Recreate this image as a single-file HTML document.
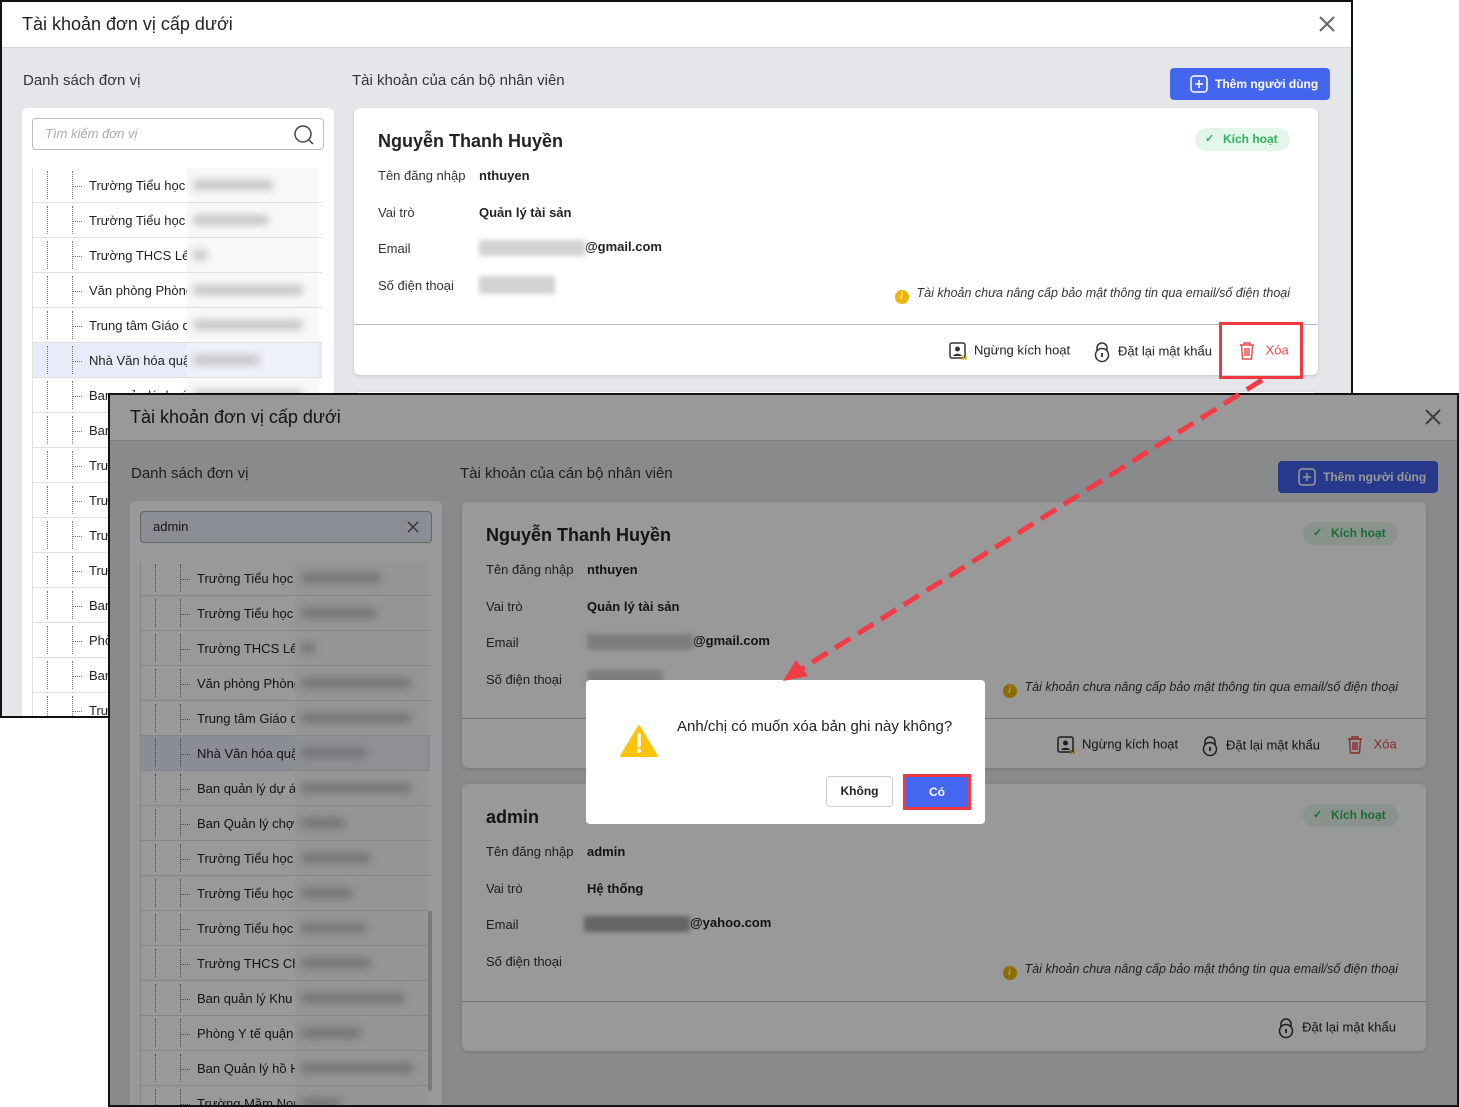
<!DOCTYPE html>
<html><head><meta charset="utf-8">
<style>
*{box-sizing:border-box;margin:0;padding:0}
html{overflow:hidden;width:1459px;height:1107px}
body{width:1459px;height:1107px;background:#fff;position:relative;overflow:hidden;font-family:"Liberation Sans",sans-serif;color:#222}
.win{position:absolute;background:#e5e6ea;border:2px solid #111;overflow:hidden}
.hd{position:absolute;left:0;top:0;right:0;height:46px;background:#fff;border-bottom:1px solid #d3d4d8}
.hd .t{position:absolute;left:20px;top:12px;font-size:18px;color:#222}
.hd .x{position:absolute;right:14px;top:12px}
.lbl{position:absolute;top:70px;font-size:15px;color:#333}
.btn{position:absolute;left:1168px;top:66px;width:160px;height:32px;background:#4465ee;border-radius:4px;color:#fff;font-size:12px;font-weight:bold;line-height:32px;padding-left:45px;white-space:nowrap}
.btn svg{position:absolute;left:20px;top:7px}
.lp{position:absolute;left:20px;top:106px;width:312px;height:640px;background:#fff;border-radius:6px;overflow:hidden}
.srch{position:absolute;left:10px;top:10px;width:292px;height:32px;border:1px solid #bbb;border-radius:4px;font-size:13px;line-height:30px;padding-left:12px}
.tree{position:absolute;left:10px;top:60px;width:290px}
.row{position:relative;height:35px;border-bottom:1px solid #e0e0e0;border-left:1px solid #e0e0e0;background:#fff}
.row.sel{background:#e8ecfa}
.row .v1,.row .v2{position:absolute;top:3px;bottom:3px;border-left:1px dotted #777}
.row .v1{left:14px}.row .v2{left:39px}
.row .h{position:absolute;left:40px;top:18px;width:9px;border-top:1px dotted #777}
.row .n{position:absolute;left:56px;top:10px;font-size:13px;width:98px;overflow:hidden;white-space:nowrap;color:#222}
.row .b{position:absolute;left:154px;top:0;width:132px;height:34px;background:#f8f8f8}
.row .b i{position:absolute;left:6px;top:12px;height:10px;background:#c4c4c4;filter:blur(4px);border-radius:4px}
.card{position:absolute;left:352px;width:964px;background:#fff;border-radius:6px;box-shadow:0 1px 3px rgba(0,0,0,.15)}
.card .nm{position:absolute;left:24px;top:23px;font-size:18px;font-weight:bold;color:#222}
.card .k{position:absolute;left:24px;font-size:13px;color:#333}
.card .v{position:absolute;left:125px;font-size:13px;font-weight:bold;color:#222}
.blr{display:inline-block;background:#d2d2d2;filter:blur(2.5px);vertical-align:middle;height:16px}
.badge{position:absolute;right:28px;top:20px;width:95px;height:23px;border-radius:12px;background:#e4f6ea;color:#2fb35b;font-size:12px;font-weight:bold;line-height:23px;padding-left:28px}
.badge:before{content:"✓";position:absolute;left:10px;font-size:11px}
.warn{position:absolute;right:28px;font-size:12.5px;font-style:italic;color:#333;white-space:nowrap}
.warn b{display:inline-block;width:14px;height:14px;border-radius:7px;background:#f1b400;color:#fff;font-size:10px;text-align:center;line-height:14px;margin-right:8px;vertical-align:-2px;font-style:italic}
.div{position:absolute;left:0;right:0;border-top:1px solid #bbb}
.act{position:absolute;font-size:13px;color:#222}
.act svg{vertical-align:middle;margin-right:6px}
.ov{position:absolute;left:0;top:0;right:0;bottom:0;background:rgba(0,0,0,.4)}
</style></head><body>

<!-- WINDOW 1 -->
<div class="win" style="left:0;top:0;width:1353px;height:718px">
 <div class="hd"><div class="t">Tài khoản đơn vị cấp dưới</div>
  <svg class="x" width="20" height="20" viewBox="0 0 20 20"><path d="M3 3L17 17M17 3L3 17" stroke="#666" stroke-width="2"/></svg></div>
 <div class="lbl" style="left:21px">Danh sách đơn vị</div>
 <div class="lbl" style="left:350px">Tài khoản của cán bộ nhân viên</div>
 <div class="btn"><svg width="18" height="18" viewBox="0 0 18 18"><rect x="1" y="1" width="16" height="16" rx="3" fill="none" stroke="#fff" stroke-width="1.5"/><path d="M9 5V13M5 9H13" stroke="#fff" stroke-width="1.5"/></svg>Thêm người dùng</div>
 <div class="lp">
  <div class="srch" style="color:#aaa;font-style:italic">Tìm kiếm đơn vị
   <svg style="position:absolute;right:8px;top:5px" width="22" height="22" viewBox="0 0 22 22"><circle cx="10" cy="10" r="8" fill="none" stroke="#444" stroke-width="1.5"/><path d="M16 16L20 20" stroke="#444" stroke-width="1.5"/></svg></div>
  <div class="tree">
   <div class="row"><i class="v1"></i><i class="v2"></i><i class="h"></i><span class="n">Trường Tiểu học</span><span class="b"><i style="width:80px"></i></span></div>
   <div class="row"><i class="v1"></i><i class="v2"></i><i class="h"></i><span class="n">Trường Tiểu học T</span><span class="b"><i style="width:76px"></i></span></div>
   <div class="row"><i class="v1"></i><i class="v2"></i><i class="h"></i><span class="n">Trường THCS Lê</span><span class="b"><i style="width:14px"></i></span></div>
   <div class="row"><i class="v1"></i><i class="v2"></i><i class="h"></i><span class="n">Văn phòng Phòng</span><span class="b"><i style="width:110px"></i></span></div>
   <div class="row"><i class="v1"></i><i class="v2"></i><i class="h"></i><span class="n">Trung tâm Giáo dục</span><span class="b"><i style="width:110px"></i></span></div>
   <div class="row sel"><i class="v1"></i><i class="v2"></i><i class="h"></i><span class="n">Nhà Văn hóa quận</span><span class="b" style="background:#eef0fa"><i style="width:66px"></i></span></div>
   <div class="row"><i class="v1"></i><i class="v2"></i><i class="h"></i><span class="n">Ban quản lý dự án</span><span class="b"><i style="width:110px"></i></span></div>
   <div class="row"><i class="v1"></i><i class="v2"></i><i class="h"></i><span class="n">Ban Quản lý chợ</span><span class="b"></span></div>
   <div class="row"><i class="v1"></i><i class="v2"></i><i class="h"></i><span class="n">Trường Tiểu học</span><span class="b"></span></div>
   <div class="row"><i class="v1"></i><i class="v2"></i><i class="h"></i><span class="n">Trường Tiểu học</span><span class="b"></span></div>
   <div class="row"><i class="v1"></i><i class="v2"></i><i class="h"></i><span class="n">Trường Tiểu học</span><span class="b"></span></div>
   <div class="row"><i class="v1"></i><i class="v2"></i><i class="h"></i><span class="n">Trường THCS</span><span class="b"></span></div>
   <div class="row"><i class="v1"></i><i class="v2"></i><i class="h"></i><span class="n">Ban quản lý</span><span class="b"></span></div>
   <div class="row"><i class="v1"></i><i class="v2"></i><i class="h"></i><span class="n">Phòng Y tế</span><span class="b"></span></div>
   <div class="row"><i class="v1"></i><i class="v2"></i><i class="h"></i><span class="n">Ban Quản lý</span><span class="b"></span></div>
   <div class="row"><i class="v1"></i><i class="v2"></i><i class="h"></i><span class="n">Trường Mầm</span><span class="b"></span></div>
  </div>
 </div>
 <div class="card" style="top:106px;height:267px">
  <div class="nm">Nguyễn Thanh Huyền</div>
  <div class="badge">Kích hoạt</div>
  <div class="k" style="top:60px">Tên đăng nhập</div><div class="v" style="top:60px">nthuyen</div>
  <div class="k" style="top:97px">Vai trò</div><div class="v" style="top:97px">Quản lý tài sản</div>
  <div class="k" style="top:133px">Email</div><div class="v" style="top:131px"><span class="blr" style="width:106px"></span>@gmail.com</div>
  <div class="k" style="top:170px">Số điện thoại</div><div class="v" style="top:168px"><span class="blr" style="width:76px;height:18px"></span></div>
  <div class="warn" style="top:178px"><b>i</b>Tài khoản chưa nâng cấp bảo mật thông tin qua email/số điện thoại</div>
  <div class="div" style="top:216px"></div>
  <div class="act" style="left:594px;top:233px"><svg width="20" height="20" viewBox="0 0 20 20"><rect x="2" y="2" width="15" height="15" rx="2" fill="none" stroke="#333" stroke-width="1.5"/><circle cx="9.5" cy="8" r="2.5" fill="#333"/><path d="M5 15c1-3 8-3 9 0" fill="#333"/><path d="M15 15v4M18 15v4" stroke="#f1b400" stroke-width="1.5"/></svg>Ngừng kích hoạt</div>
  <div class="act" style="left:738px;top:233px"><svg width="20" height="22" viewBox="0 0 20 22"><path d="M5 10V7a5 5 0 0110 0v3" fill="none" stroke="#333" stroke-width="1.5"/><circle cx="10" cy="14" r="6.5" fill="none" stroke="#333" stroke-width="1.5"/><path d="M10 12v4" stroke="#333" stroke-width="1.8"/></svg>Đặt lại mật khẩu</div>
  <div class="act" style="left:884px;top:233px;color:#e24a4a"><svg width="18" height="20" viewBox="0 0 18 20"><path d="M2 4H16M6 4V2H12V4M3.5 4L4.5 18H13.5L14.5 4M7 7V15M9 7V15M11 7V15" fill="none" stroke="#e84a4a" stroke-width="1.4"/></svg>&nbsp;Xóa</div>
 </div>
 <div class="card" style="top:390px;height:300px"></div>
</div>
<div style="position:absolute;left:1219px;top:322px;width:84px;height:57px;border:3px solid #f0383f"></div>

<!-- WINDOW 2 -->
<div class="win" style="left:108px;top:393px;width:1351px;height:714px;border-width:2px">
 <div class="hd"><div class="t">Tài khoản đơn vị cấp dưới</div>
  <svg class="x" width="20" height="20" viewBox="0 0 20 20"><path d="M3 3L17 17M17 3L3 17" stroke="#666" stroke-width="2"/></svg></div>
 <div class="lbl" style="left:21px">Danh sách đơn vị</div>
 <div class="lbl" style="left:350px">Tài khoản của cán bộ nhân viên</div>
 <div class="btn" style="left:1168px;background:#4060e8"><svg width="18" height="18" viewBox="0 0 18 18"><rect x="1" y="1" width="16" height="16" rx="3" fill="none" stroke="#fff" stroke-width="1.5"/><path d="M9 5V13M5 9H13" stroke="#fff" stroke-width="1.5"/></svg>Thêm người dùng</div>
 <div class="lp">
  <div class="srch" style="background:#e8edf8;border-color:#aaa;color:#222">admin
   <svg style="position:absolute;right:12px;top:9px" width="12" height="12" viewBox="0 0 12 12"><path d="M1 1L11 11M11 1L1 11" stroke="#555" stroke-width="1.5"/></svg></div>
  <div class="tree">
   <div class="row"><i class="v1"></i><i class="v2"></i><i class="h"></i><span class="n">Trường Tiểu học</span><span class="b"><i style="width:80px"></i></span></div>
   <div class="row"><i class="v1"></i><i class="v2"></i><i class="h"></i><span class="n">Trường Tiểu học</span><span class="b"><i style="width:76px"></i></span></div>
   <div class="row"><i class="v1"></i><i class="v2"></i><i class="h"></i><span class="n">Trường THCS Lê</span><span class="b"><i style="width:14px"></i></span></div>
   <div class="row"><i class="v1"></i><i class="v2"></i><i class="h"></i><span class="n">Văn phòng Phòng</span><span class="b"><i style="width:110px"></i></span></div>
   <div class="row"><i class="v1"></i><i class="v2"></i><i class="h"></i><span class="n">Trung tâm Giáo dục</span><span class="b"><i style="width:110px"></i></span></div>
   <div class="row sel"><i class="v1"></i><i class="v2"></i><i class="h"></i><span class="n">Nhà Văn hóa quận</span><span class="b" style="background:#eef0fa"><i style="width:66px"></i></span></div>
   <div class="row"><i class="v1"></i><i class="v2"></i><i class="h"></i><span class="n">Ban quản lý dự án</span><span class="b"><i style="width:110px"></i></span></div>
   <div class="row"><i class="v1"></i><i class="v2"></i><i class="h"></i><span class="n">Ban Quản lý chợ</span><span class="b"><i style="width:44px"></i></span></div>
   <div class="row"><i class="v1"></i><i class="v2"></i><i class="h"></i><span class="n">Trường Tiểu học</span><span class="b"><i style="width:70px"></i></span></div>
   <div class="row"><i class="v1"></i><i class="v2"></i><i class="h"></i><span class="n">Trường Tiểu học</span><span class="b"><i style="width:52px"></i></span></div>
   <div class="row"><i class="v1"></i><i class="v2"></i><i class="h"></i><span class="n">Trường Tiểu học</span><span class="b"><i style="width:66px"></i></span></div>
   <div class="row"><i class="v1"></i><i class="v2"></i><i class="h"></i><span class="n">Trường THCS Chu</span><span class="b"><i style="width:70px"></i></span></div>
   <div class="row"><i class="v1"></i><i class="v2"></i><i class="h"></i><span class="n">Ban quản lý Khu</span><span class="b"><i style="width:104px"></i></span></div>
   <div class="row"><i class="v1"></i><i class="v2"></i><i class="h"></i><span class="n">Phòng Y tế quận</span><span class="b"><i style="width:60px"></i></span></div>
   <div class="row"><i class="v1"></i><i class="v2"></i><i class="h"></i><span class="n">Ban Quản lý hồ H</span><span class="b"><i style="width:112px"></i></span></div>
   <div class="row"><i class="v1"></i><i class="v2"></i><i class="h"></i><span class="n">Trường Mầm Non</span><span class="b"><i style="width:40px"></i></span></div>
  </div>
  <div style="position:absolute;left:298px;top:410px;width:4px;height:180px;background:#ccc;border-radius:2px"></div>
 </div>
 <div class="card" style="top:107px;height:266px">
  <div class="nm">Nguyễn Thanh Huyền</div>
  <div class="badge">Kích hoạt</div>
  <div class="k" style="top:60px">Tên đăng nhập</div><div class="v" style="top:60px">nthuyen</div>
  <div class="k" style="top:97px">Vai trò</div><div class="v" style="top:97px">Quản lý tài sản</div>
  <div class="k" style="top:133px">Email</div><div class="v" style="top:131px"><span class="blr" style="width:106px"></span>@gmail.com</div>
  <div class="k" style="top:170px">Số điện thoại</div><div class="v" style="top:168px"><span class="blr" style="width:76px;height:18px"></span></div>
  <div class="warn" style="top:178px"><b>i</b>Tài khoản chưa nâng cấp bảo mật thông tin qua email/số điện thoại</div>
  <div class="div" style="top:216px"></div>
  <div class="act" style="left:594px;top:233px"><svg width="20" height="20" viewBox="0 0 20 20"><rect x="2" y="2" width="15" height="15" rx="2" fill="none" stroke="#333" stroke-width="1.5"/><circle cx="9.5" cy="8" r="2.5" fill="#333"/><path d="M5 15c1-3 8-3 9 0" fill="#333"/><path d="M15 15v4M18 15v4" stroke="#f1b400" stroke-width="1.5"/></svg>Ngừng kích hoạt</div>
  <div class="act" style="left:738px;top:233px"><svg width="20" height="22" viewBox="0 0 20 22"><path d="M5 10V7a5 5 0 0110 0v3" fill="none" stroke="#333" stroke-width="1.5"/><circle cx="10" cy="14" r="6.5" fill="none" stroke="#333" stroke-width="1.5"/><path d="M10 12v4" stroke="#333" stroke-width="1.8"/></svg>Đặt lại mật khẩu</div>
  <div class="act" style="left:884px;top:233px;color:#e24a4a"><svg width="18" height="20" viewBox="0 0 18 20"><path d="M2 4H16M6 4V2H12V4M3.5 4L4.5 18H13.5L14.5 4M7 7V15M9 7V15M11 7V15" fill="none" stroke="#e84a4a" stroke-width="1.4"/></svg>&nbsp;Xóa</div>
 </div>
 <div class="card" style="top:389px;height:267px">
  <div class="nm">admin</div>
  <div class="badge">Kích hoạt</div>
  <div class="k" style="top:60px">Tên đăng nhập</div><div class="v" style="top:60px">admin</div>
  <div class="k" style="top:97px">Vai trò</div><div class="v" style="top:97px">Hệ thống</div>
  <div class="k" style="top:133px">Email</div><div class="v" style="top:131px;left:122px"><span class="blr" style="width:106px;background:#a8a8a8"></span>@yahoo.com</div>
  <div class="k" style="top:170px">Số điện thoại</div>
  <div class="warn" style="top:178px"><b>i</b>Tài khoản chưa nâng cấp bảo mật thông tin qua email/số điện thoại</div>
  <div class="div" style="top:217px"></div>
  <div class="act" style="right:30px;top:233px"><svg width="20" height="22" viewBox="0 0 20 22"><path d="M5 10V7a5 5 0 0110 0v3" fill="none" stroke="#333" stroke-width="1.5"/><circle cx="10" cy="14" r="6.5" fill="none" stroke="#333" stroke-width="1.5"/><path d="M10 12v4" stroke="#333" stroke-width="1.8"/></svg>Đặt lại mật khẩu</div>
 </div>
 <div class="ov"></div>
</div>

<!-- DIALOG -->
<div style="position:absolute;left:586px;top:680px;width:399px;height:144px;background:#fff;border-radius:4px">
 <svg style="position:absolute;left:34px;top:44px" width="38" height="34" viewBox="0 0 38 34"><path d="M19 2L37 32H1Z" fill="#fdc30a" stroke="#fdc30a" stroke-width="2" stroke-linejoin="round"/><path d="M19 11V22" stroke="#fff" stroke-width="3.5" stroke-linecap="round"/><circle cx="19" cy="27" r="2" fill="#fff"/></svg>
 <div style="position:absolute;left:91px;top:38px;font-size:15px;color:#222">Anh/chị có muốn xóa bản ghi này không?</div>
 <div style="position:absolute;left:240px;top:96px;width:67px;height:31px;border:1px solid #ccc;border-radius:4px;font-size:12px;font-weight:bold;text-align:center;line-height:29px;color:#222">Không</div>
 <div style="position:absolute;left:317px;top:94px;width:68px;height:36px;border:3px solid #f0383f;background:#4566ee;color:#fff;font-size:12px;font-weight:bold;text-align:center;line-height:30px">Có</div>
</div>

<!-- ARROW -->
<svg style="position:absolute;left:0;top:0" width="1459" height="1107">
 <line x1="1262" y1="380" x2="800" y2="670" stroke="#f23b44" stroke-width="5" stroke-dasharray="18 9"/>
 <path d="M783 681L796 660L808 676Z" fill="#f23b44"/>
</svg>
</body></html>
